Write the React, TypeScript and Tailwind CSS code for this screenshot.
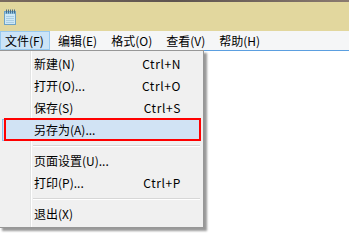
import React from "react";

const font = { fontFamily: '"Noto Sans CJK SC", "Noto Sans", sans-serif' };

const menus = ["文件(F)", "编辑(E)", "格式(O)", "查看(V)", "帮助(H)"];

type Item = { label: string; key?: string; sep?: boolean; active?: boolean };

const items: Item[] = [
  { label: "新建(N)", key: "Ctrl+N" },
  { label: "打开(O)...", key: "Ctrl+O" },
  { label: "保存(S)", key: "Ctrl+S" },
  { label: "另存为(A)...", active: true },
  { label: "", sep: true },
  { label: "页面设置(U)..." },
  { label: "打印(P)...", key: "Ctrl+P" },
  { label: "", sep: true },
  { label: "退出(X)" },
];

function NotepadIcon() {
  return (
    <svg width="14" height="16" viewBox="0 0 14 16">
      <rect x="1.5" y="2.5" width="11" height="13" fill="#cfe8f5" stroke="#6fa3c7" />
      <rect x="2" y="3" width="10" height="2" fill="#8cc2e3" />
      {[3, 5, 7, 9, 11].map((x) => (
        <rect key={x} x={x} y="0.5" width="1" height="4" fill="#4a6f8a" />
      ))}
      {[7, 9, 11, 13].map((y) => (
        <line key={y} x1="3" x2="11" y1={y + 0.5} y2={y + 0.5} stroke="#a9cde3" />
      ))}
    </svg>
  );
}

export default function App() {
  return (
    <div className="relative w-[349px] h-[248px] overflow-hidden bg-white text-[12px] text-black" style={font}>
      {/* title bar */}
      <div className="h-[2px] bg-gradient-to-r from-[#7a6a5e] via-[#5e5450] to-[#8a7a70]" />
      <div className="h-[29px] bg-[#e2d79e] flex items-center pl-[3px]">
        <NotepadIcon />
      </div>

      {/* menu bar */}
      <div className="h-[19px] bg-[#f5f6f7] flex items-center">
        {menus.map((m, i) => (
          <div
            key={m}
            className={
              i === 0
                ? "h-[19px] w-[50px] pl-[4px] flex items-center bg-[#cce4f7] border border-[#99c9ef] mr-[2px]"
                : "h-[19px] px-[6px] flex items-center mr-[2px]"
            }
          >
            {m}
          </div>
        ))}
      </div>

      {/* edit area */}
      <div className="border-t border-[#5b9fe0] h-[197px]" />

      {/* dropdown */}
      <div className="absolute left-[-1px] top-[50px] w-[205px] bg-[#f0f0f0] border border-[#979797] shadow-[3px_3px_2px_rgba(0,0,0,0.4)] pt-[2px] pb-[2px]">
        <div className="absolute left-[30px] top-0 bottom-0 w-[1px] bg-[#e2e3e3]" />
        <div className="absolute left-[31px] top-0 bottom-0 w-[1px] bg-white" />
        {items.map((it, i) =>
          it.sep ? (
            <div key={i} className="h-[9px] flex flex-col justify-center pl-[33px] pr-[3px]">
              <div className="h-[1px] bg-[#d7d7d7]" />
              <div className="h-[1px] bg-white" />
            </div>
          ) : (
            <div
              key={i}
              className={
                "relative h-[22px] flex items-center mx-[2px] pr-[19px] " +
                (it.active ? "bg-[#d1e3f4] border border-[#8fbde8]" : "border border-transparent")
              }
            >
              <span className="pl-[31px] flex-1">{it.label}</span>
              {it.key && <span className="tracking-[0.6px] text-right">{it.key}</span>}
              {it.active && (
                <div className="absolute left-[1px] right-[-1px] top-[-2px] bottom-[-1px] border-2 border-[#ff0000]" />
              )}
            </div>
          )
        )}
      </div>
    </div>
  );
}
